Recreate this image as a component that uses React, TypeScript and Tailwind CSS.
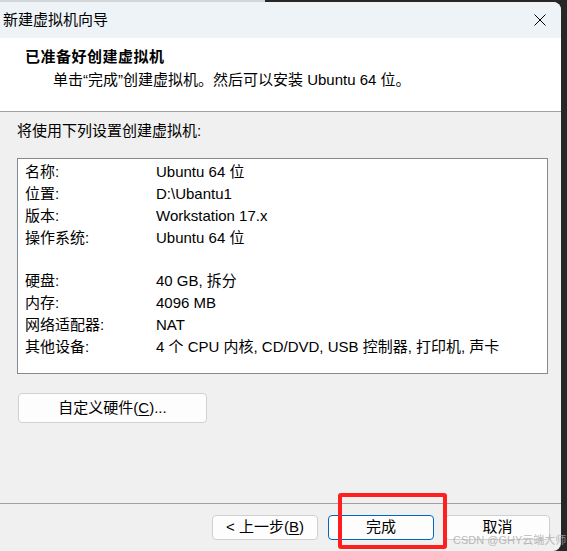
import React from "react";

const rows: [string, string][] = [
  ["名称:", "Ubuntu 64 位"],
  ["位置:", "D:\\Ubantu1"],
  ["版本:", "Workstation 17.x"],
  ["操作系统:", "Ubuntu 64 位"],
  ["", ""],
  ["硬盘:", "40 GB, 拆分"],
  ["内存:", "4096 MB"],
  ["网络适配器:", "NAT"],
  ["其他设备:", "4 个 CPU 内核, CD/DVD, USB 控制器, 打印机, 声卡"],
];

function Button({ children, primary = false, className = "" }: { children: React.ReactNode; primary?: boolean; className?: string }) {
  return (
    <div
      className={`flex items-center justify-center rounded-[4px] border bg-[#fdfdfd] text-[15px] text-black ${
        primary ? "border-[#0067c0]" : "border-[#d0d0d0]"
      } ${className}`}
    >
      {children}
    </div>
  );
}

export default function App() {
  return (
    <div
      className="relative w-[567px] h-[551px] overflow-hidden bg-[#272727] flex flex-col text-black"
      style={{ fontFamily: '"Liberation Sans", "Noto Sans CJK SC", sans-serif' }}
    >
      {/* strip of the window behind */}
      <div className="h-[2px] flex shrink-0">
        <div className="w-[265px] bg-[#d3d6d9]" />
      </div>

      <div className="w-[561px] flex-1 flex flex-col rounded-tr-[8px] rounded-br-[8px] overflow-hidden bg-[#f0f0f0]">
        {/* Title bar */}
        <div className="h-[36px] shrink-0 bg-[#eef3f8] flex items-center justify-between pl-[3px] pr-[15px]">
          <span className="text-[15px] leading-[20px]">新建虚拟机向导</span>
          <svg width="12" height="12" viewBox="0 0 12 12">
            <path d="M0.5 0.5 L11.5 11.5 M11.5 0.5 L0.5 11.5" stroke="#000" strokeWidth="1" fill="none" />
          </svg>
        </div>

        {/* Header */}
        <div className="h-[74px] shrink-0 bg-white border-b border-[#a0a0a0] pl-[25px] pt-[9px]">
          <div className="text-[15px] leading-[20px] font-bold tracking-[0.5px]">已准备好创建虚拟机</div>
          <div className="text-[15px] leading-[20px] mt-[3px] pl-[28px]">单击“完成”创建虚拟机。然后可以安装 Ubuntu 64 位。</div>
        </div>

        {/* Body */}
        <div className="flex-1 pl-[17px] pt-[9px]">
          <div className="text-[15px] leading-[20px]">将使用下列设置创建虚拟机:</div>
          <div className="mt-[17px] w-[531px] h-[216px] bg-white border border-[#858a91] pl-[7px] pt-[2px]">
            {rows.map(([k, v], i) => (
              <div key={i} className="grid grid-cols-[131px_1fr] text-[15px] leading-[21.875px] h-[21.875px]">
                <span>{k}</span>
                <span>{v}</span>
              </div>
            ))}
          </div>
          <Button className="mt-[19px] ml-[1px] w-[189px] h-[30px]">
            自定义硬件(<span className="underline underline-offset-2">C</span>)...
          </Button>
        </div>

        {/* Footer */}
        <div className="h-[48px] shrink-0 border-t border-[#a0a0a0] flex justify-end items-start pt-[11px] pr-[11px]">
          <Button className="w-[106px] h-[25px]">
            &lt; 上一步(<span className="underline underline-offset-2">B</span>)
          </Button>
          <Button primary className="ml-[10px] w-[106px] h-[25px]">完成</Button>
          <Button className="ml-[11px] w-[105px] h-[25px]">取消</Button>
        </div>
      </div>

      {/* annotation overlay */}
      <div className="absolute left-[338px] top-[493px] w-[109px] h-[56px] border-[4px] border-[#ff1f1f] rounded-[3px]" />
      <div className="absolute left-[453px] top-[533px] text-[11px] leading-[14px] text-[#a8a8a8]/80 whitespace-nowrap">
        CSDN @GHY云端大师
      </div>
    </div>
  );
}
